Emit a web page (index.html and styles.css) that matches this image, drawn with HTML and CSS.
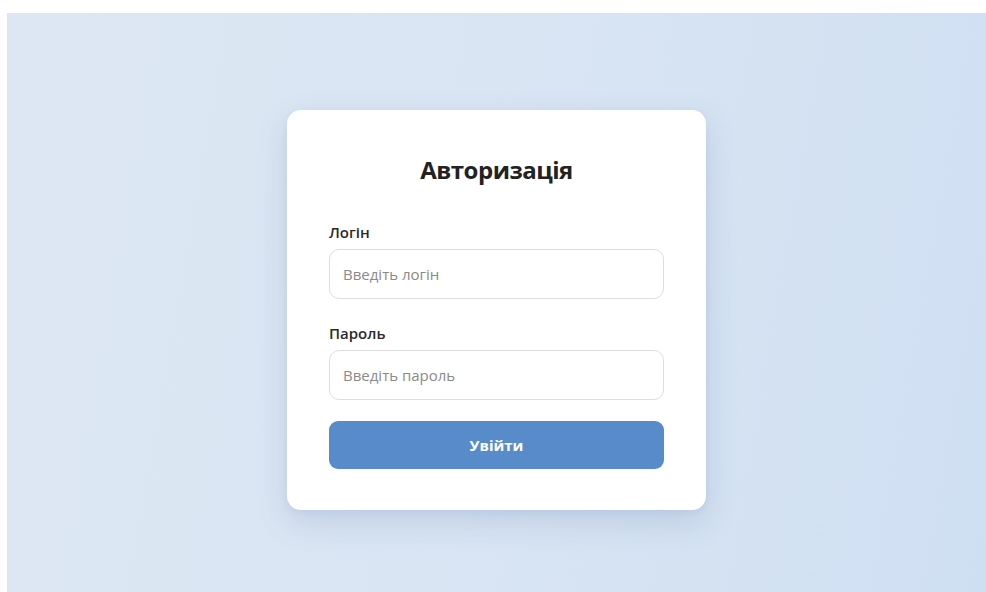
FILE: index.html
```html
<!DOCTYPE html>
<html lang="uk">
<head>
<meta charset="utf-8">
<title>Авторизація</title>
<link rel="stylesheet" href="styles.css">
</head>
<body>
<main class="page">
  <form class="card" action="#" onsubmit="return false">
    <h1 class="card-title">Авторизація</h1>
    <div class="field">
      <label class="field-label" for="login">Логін</label>
      <input class="field-input" id="login" type="text" placeholder="Введіть логін">
    </div>
    <div class="field">
      <label class="field-label" for="password">Пароль</label>
      <input class="field-input" id="password" type="password" placeholder="Введіть пароль">
    </div>
    <button class="submit" type="submit">Увійти</button>
  </form>
</main>
</body>
</html>
```
FILE: styles.css
```css
* {
  box-sizing: border-box;
}

html,
body {
  height: 100%;
}

body {
  margin: 0;
  padding: 13px 0 0 7px;
  background: #ffffff;
  font-family: "Open Sans", "Noto Sans", sans-serif;
  color: #222222;
  overflow: hidden;
}

.page {
  height: 579px;
  display: flex;
  justify-content: center;
  align-items: flex-start;
  padding-top: 97px;
  background: linear-gradient(100deg, #dde7f3 0%, #d9e5f3 50%, #cfdff2 100%);
}

.card {
  width: 419px;
  background: #ffffff;
  border-radius: 14px;
  padding: 44px 42px 41px;
  box-shadow: 0 12px 32px rgba(70, 100, 150, 0.18), 0 2px 6px rgba(70, 100, 150, 0.06);
}

.card-title {
  margin: 0 0 36px;
  font-size: 24px;
  line-height: 32px;
  font-weight: 700;
  letter-spacing: -0.5px;
  text-align: center;
  color: #222222;
}

.field {
  margin-bottom: 24px;
}

.field-label {
  display: block;
  margin-bottom: 7px;
  font-size: 15px;
  line-height: 20px;
  font-weight: 600;
  color: #2a2a2a;
}

.field-input {
  display: block;
  width: 100%;
  height: 50px;
  padding: 0 13px;
  border: 1px solid #dedede;
  border-radius: 10px;
  background: #ffffff;
  font-family: inherit;
  font-size: 15px;
  color: #333333;
  outline: none;
}

.field-input::placeholder {
  color: #8a8a8a;
}

.submit {
  display: block;
  width: 100%;
  height: 48px;
  margin-top: -3px;
  border: none;
  border-radius: 9px;
  background: #588bca;
  color: #ffffff;
  font-family: inherit;
  font-size: 15px;
  font-weight: 700;
  cursor: pointer;
}
```
